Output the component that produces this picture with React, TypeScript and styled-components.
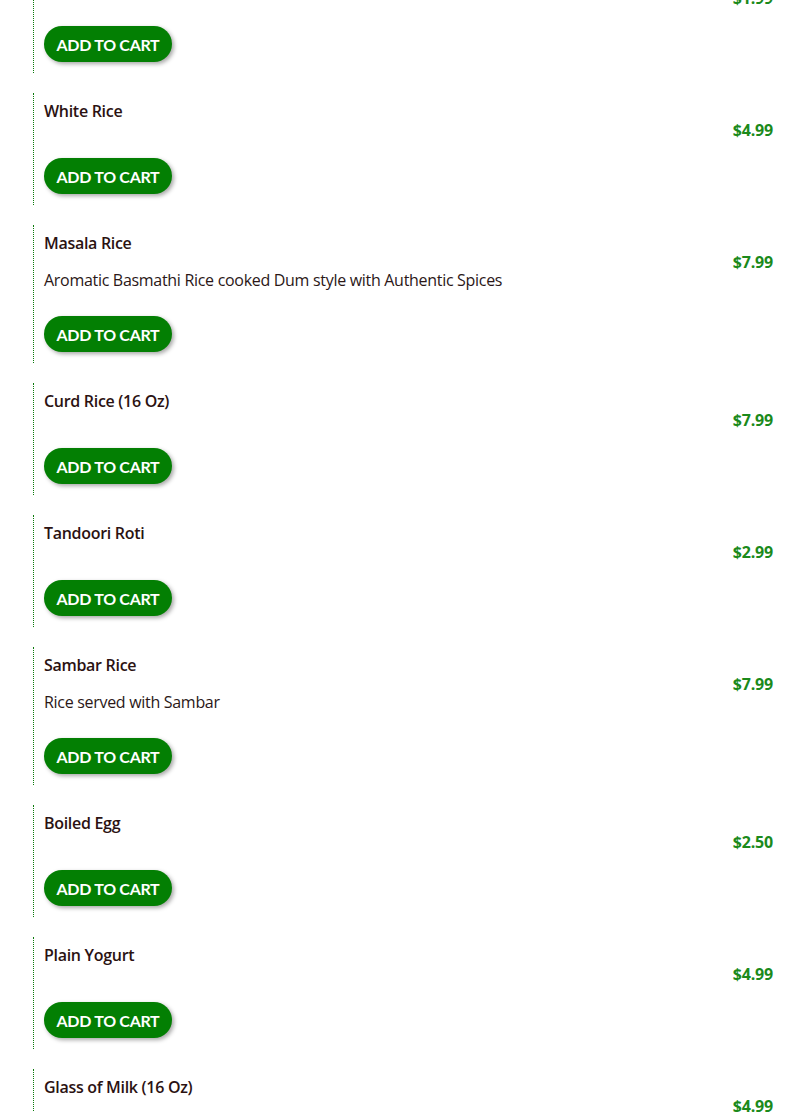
import React from "react";
import styled, { createGlobalStyle } from "styled-components";

const Global = createGlobalStyle`
  html, body { margin: 0; padding: 0; background: #ffffff; }
  body { font-family: "Open Sans", "Liberation Sans", sans-serif; overflow: hidden; }
`;

type Item = { name: string; desc?: string; price: string };

const items: Item[] = [
  { name: "Plain Naan", price: "$1.99" },
  { name: "White Rice", price: "$4.99" },
  { name: "Masala Rice", desc: "Aromatic Basmathi Rice cooked Dum style with Authentic Spices", price: "$7.99" },
  { name: "Curd Rice (16 Oz)", price: "$7.99" },
  { name: "Tandoori Roti", price: "$2.99" },
  { name: "Sambar Rice", desc: "Rice served with Sambar", price: "$7.99" },
  { name: "Boiled Egg", price: "$2.50" },
  { name: "Plain Yogurt", price: "$4.99" },
  { name: "Glass of Milk (16 Oz)", price: "$4.99" },
];

const List = styled.div`
  display: flex;
  flex-direction: column;
  gap: 20px;
  padding: 0 12px 0 33px;
  margin-top: -39px;
`;

const Row = styled.div`
  display: flex;
  align-items: flex-start;
  border-left: 1px dotted #0a7a0a;
  padding: 6px 0 11px 10px;
`;

const Info = styled.div`
  flex: 1;
  display: flex;
  flex-direction: column;
  align-items: flex-start;
`;

const Title = styled.div<{ $hasDesc: boolean }>`
  font-family: "Open Sans", sans-serif;
  font-weight: 600;
  font-size: 16px;
  line-height: 24px;
  color: #2b1212;
  letter-spacing: -0.3px;
  margin-bottom: ${(p) => (p.$hasDesc ? "13px" : "35px")};
`;

const Desc = styled.div`
  font-family: "Open Sans", sans-serif;
  font-size: 16px;
  line-height: 24px;
  color: #2b1717;
  letter-spacing: -0.3px;
  margin-bottom: 24px;
`;

const CartButton = styled.button`
  height: 36px;
  width: 128px;
  border: none;
  border-radius: 18px;
  background: #037f03;
  color: #ffffff;
  font-family: "Lato", sans-serif;
  font-weight: 700;
  font-size: 16px;
  letter-spacing: -0.3px;
  padding: 0;
  box-shadow: 2px 2px 4px rgba(0, 0, 0, 0.35);
  cursor: pointer;
`;

const Price = styled.div`
  font-family: "Open Sans", sans-serif;
  font-weight: 700;
  font-size: 16px;
  line-height: 24px;
  color: #1b8a1b;
  letter-spacing: -0.2px;
  padding-top: 19px;
`;

export default function App() {
  return (
    <>
      <Global />
      <List>
        {items.map((it) => (
          <Row key={it.name}>
            <Info>
              <Title $hasDesc={!!it.desc}>{it.name}</Title>
              {it.desc && <Desc>{it.desc}</Desc>}
              <CartButton>ADD TO CART</CartButton>
            </Info>
            <Price>{it.price}</Price>
          </Row>
        ))}
      </List>
    </>
  );
}
